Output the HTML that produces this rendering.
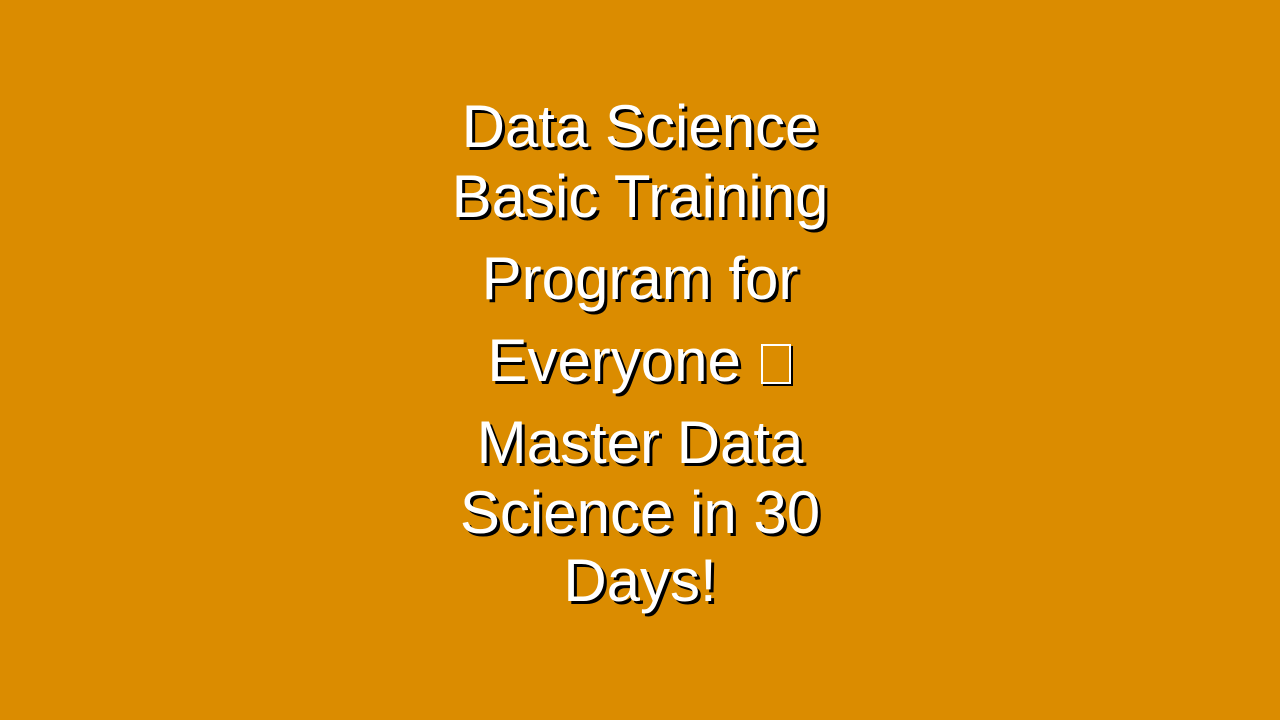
<!DOCTYPE html>
<html><head><meta charset="utf-8"><style>
html,body{margin:0;padding:0}
body{width:1280px;height:720px;background:#db8c00;position:relative;overflow:hidden;font-family:"Liberation Sans",sans-serif}
.l{position:absolute;left:0;width:1280px;text-align:center;font-size:60px;line-height:1;color:#fff;text-shadow:3px 3px 0 #000;white-space:nowrap}
.box{display:inline-block;width:30px;height:40px;border:2px solid #fff;box-shadow:2px 2px 0 #000;vertical-align:-3px;margin-left:3px;box-sizing:border-box}
</style></head><body>
<div class="l" style="top:97px">Data Science</div>
<div class="l" style="top:167px">Basic Training</div>
<div class="l" style="top:249px">Program for</div>
<div class="l" style="top:331px;left:-1px">Everyone <span class="box"></span></div>
<div class="l" style="top:413px">Master Data</div>
<div class="l" style="top:483px">Science in 30</div>
<div class="l" style="top:551px">Days!</div>
</body></html>
